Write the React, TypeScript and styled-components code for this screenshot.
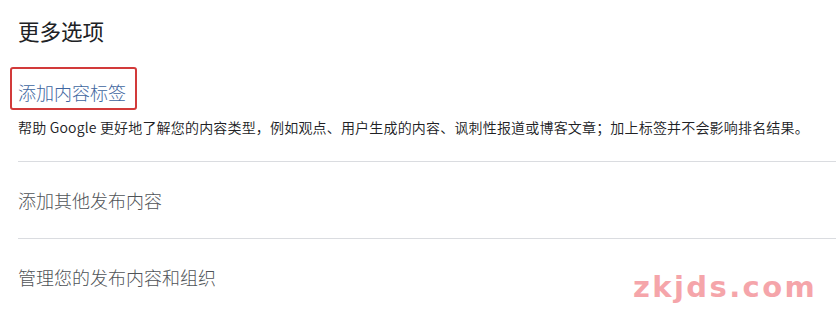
import React from "react";
import styled, { createGlobalStyle } from "styled-components";

const Global = createGlobalStyle`
  html, body { margin: 0; padding: 0; background: #ffffff; }
  body { font-family: "Noto Sans CJK SC", "Noto Sans", sans-serif; }
`;

const Page = styled.div`
  position: relative;
  width: 836px;
  height: 319px;
  overflow: hidden;
  padding: 17px 0 0 18px;
  box-sizing: border-box;
`;

const Title = styled.h2`
  margin: 0;
  font-size: 21.5px;
  font-weight: 400;
  line-height: 28px;
  color: #202124;
`;

const LinkBox = styled.div`
  display: inline-block;
  margin: 22px 0 0 -8px;
  border: 2.5px solid #d23a3a;
  border-radius: 3px;
  padding: 11px 9px 4px 6px;
`;

const LinkText = styled.a`
  display: block;
  font-size: 18px;
  font-weight: 300;
  line-height: 24px;
  color: #3e66a0;
  text-decoration: none;
`;

const Desc = styled.p`
  margin: 7px 0 0 0;
  font-size: 14px;
  font-weight: 350;
  line-height: 20px;
  letter-spacing: 0.18px;
  color: #202124;
  white-space: nowrap;
`;

const Divider = styled.div<{ $top?: number }>`
  height: 1px;
  background: #dadce0;
  margin-top: ${(p) => p.$top ?? 0}px;
`;

const Row = styled.div`
  height: 76px;
  display: flex;
  align-items: center;
  font-size: 18px;
  font-weight: 300;
  color: #4f5357;
`;

const Watermark = styled.div`
  position: absolute;
  left: 633px;
  top: 270px;
  font-family: "DejaVu Sans", sans-serif;
  font-weight: 700;
  font-size: 29px;
  letter-spacing: 2.4px;
  line-height: 34px;
  color: #f5a5aa;
`;

export default function App() {
  return (
    <>
      <Global />
      <Page>
        <Title>更多选项</Title>
        <LinkBox>
          <LinkText href="#">添加内容标签</LinkText>
        </LinkBox>
        <Desc>
          帮助 Google 更好地了解您的内容类型，例如观点、用户生成的内容、讽刺性报道或博客文章；加上标签并不会影响排名结果。
        </Desc>
        <Divider $top={24} />
        <Row>添加其他发布内容</Row>
        <Divider />
        <Row>管理您的发布内容和组织</Row>
        <Watermark>zkjds.com</Watermark>
      </Page>
    </>
  );
}
